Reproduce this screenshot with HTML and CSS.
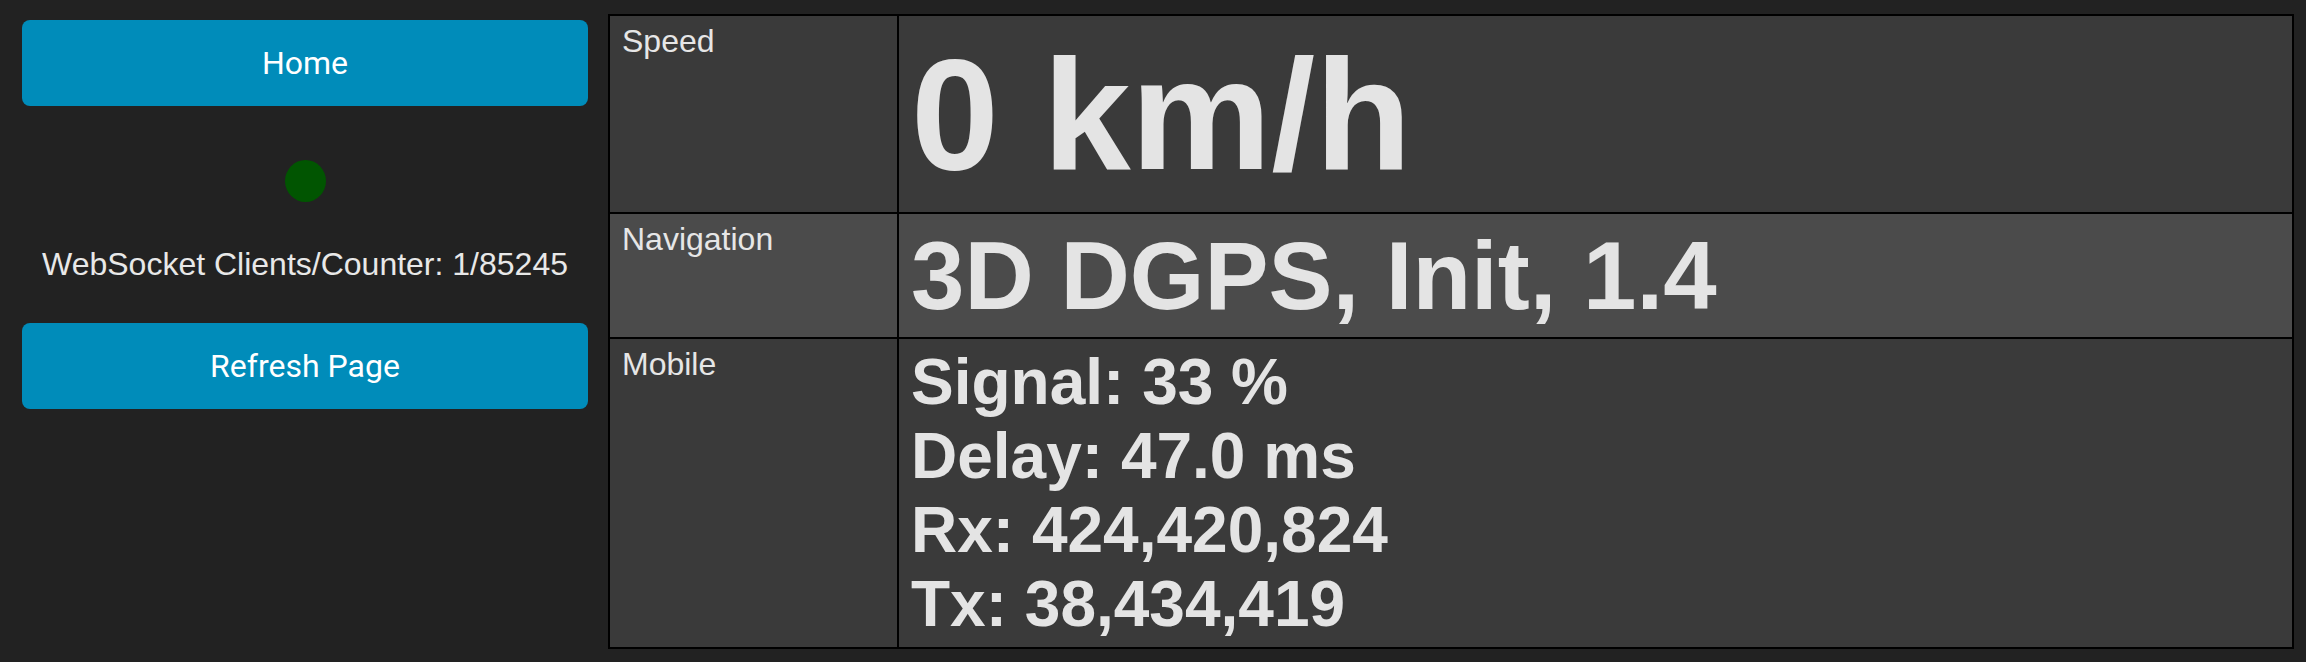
FILE: index.html
```html
<!DOCTYPE html>
<html lang="en">
<head>
<meta charset="utf-8">
<title>Status</title>
<link rel="stylesheet" href="styles.css">
</head>
<body>
<div class="page">
  <aside class="side">
    <button class="btn">Home</button>
    <div class="dot"></div>
    <p class="clients">WebSocket Clients/Counter: 1/85245</p>
    <button class="btn btn-refresh">Refresh Page</button>
  </aside>
  <main class="status">
    <div class="cell label row-dark">Speed</div>
    <div class="cell value row-dark speed">0 km/h</div>
    <div class="cell label row-light">Navigation</div>
    <div class="cell value row-light nav">3D DGPS, Init, 1.4</div>
    <div class="cell label row-dark">Mobile</div>
    <div class="cell value row-dark mobile">
      <div>Signal: 33 %</div>
      <div>Delay: 47.0 ms</div>
      <div>Rx: 424,420,824</div>
      <div>Tx: 38,434,419</div>
    </div>
  </main>
</div>
</body>
</html>
```

FILE: styles.css
```css
html, body {
  margin: 0;
  padding: 0;
  background: #222222;
}

body {
  font-family: "Liberation Sans", Arial, Helvetica, sans-serif;
  color: #e6e6e6;
}

.page {
  display: flex;
  align-items: flex-start;
  padding: 14px 12px 0 0;
}

.side {
  width: 566px;
  flex: 0 0 566px;
  padding: 6px 20px 0 22px;
  display: flex;
  flex-direction: column;
  align-items: center;
}

.btn {
  width: 100%;
  height: 86px;
  border: none;
  border-radius: 8px;
  background: #008cba;
  color: #ffffff;
  font-family: Roboto, "Liberation Sans", sans-serif;
  font-size: 32px;
  display: flex;
  align-items: center;
  justify-content: center;
  padding: 0;
  cursor: pointer;
}

.dot {
  width: 41px;
  height: 42px;
  border-radius: 50%;
  background: #015501;
  margin-top: 54px;
}

.clients {
  margin: 44px 0 0 0;
  font-size: 32px;
  line-height: normal;
  color: #e8e8e8;
  text-align: center;
  white-space: nowrap;
}

.btn-refresh {
  margin-top: 40px;
}

.status {
  flex: 1;
  display: grid;
  grid-template-columns: 287px 1fr;
  grid-template-rows: 196px 123px 308px;
  gap: 2px;
  background: #000000;
  border: 2px solid #000000;
}

.cell {
  padding: 7px 12px;
}

.row-dark {
  background: #3a3a3a;
}

.row-light {
  background: #4b4b4b;
}

.label {
  font-size: 32px;
  line-height: normal;
  color: #e6e6e6;
}

.value {
  display: flex;
  flex-direction: column;
  justify-content: center;
  font-weight: bold;
  color: #e4e4e4;
  line-height: normal;
  padding-top: 0;
  padding-bottom: 0;
}

.speed {
  font-size: 158px;
}

.nav {
  font-size: 96px;
}

.mobile {
  font-size: 64px;
}
```
